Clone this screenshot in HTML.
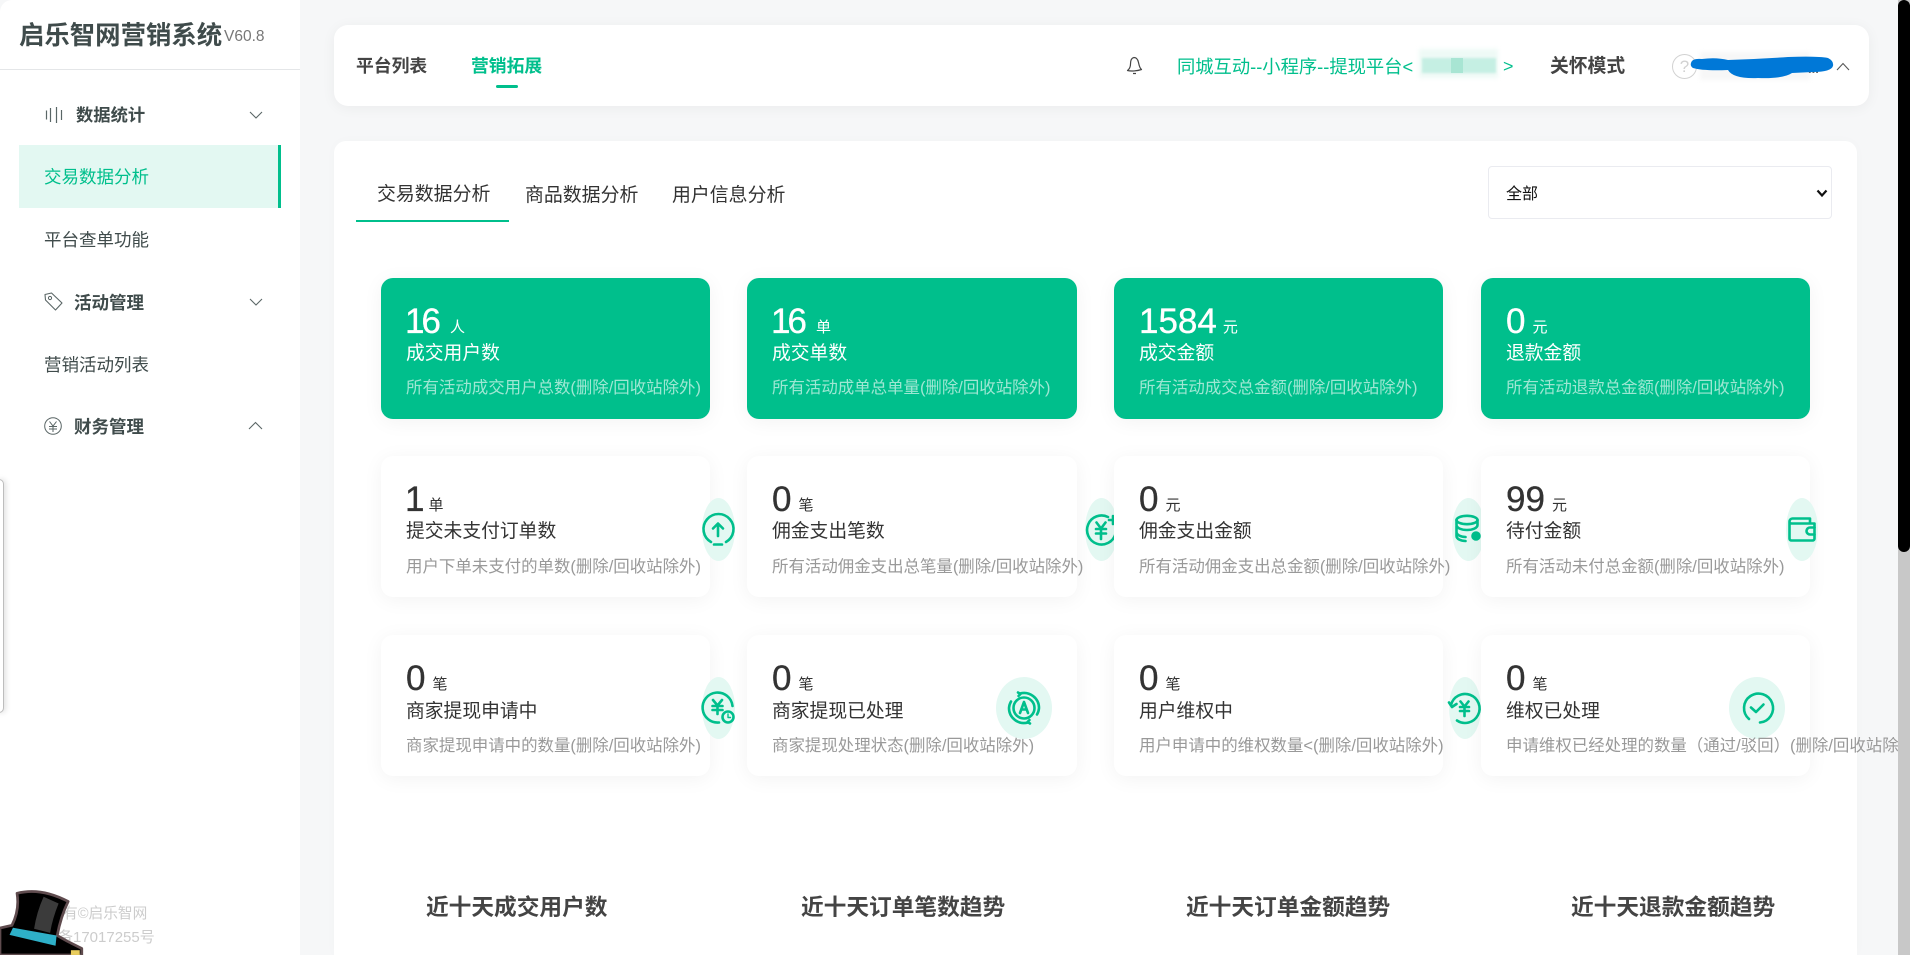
<!DOCTYPE html>
<html lang="zh"><head><meta charset="utf-8"><title>启乐智网营销系统</title>
<style>
*{box-sizing:border-box;margin:0;padding:0}
html,body{width:1910px;height:955px;overflow:hidden;background:#f6f7f8}
body{font-family:"Liberation Sans","Noto Sans CJK SC",sans-serif;color:#333;position:relative}
.a{position:absolute;white-space:nowrap;line-height:1}
#side{position:absolute;left:0;top:0;width:300px;height:955px;background:#fff;border-radius:12px 0 0 0}
.m{color:#3f4b4b;font-size:17.5px}
.b{font-weight:700}
#main{position:absolute;left:334px;top:141px;width:1523px;height:814px;background:#fff;border-radius:12px 12px 0 0;box-shadow:0 0 12px rgba(0,0,0,.02)}
#head{position:absolute;left:334px;top:25px;width:1535px;height:81px;background:#fff;border-radius:14px;box-shadow:0 2px 14px rgba(0,0,0,.05)}
.card{position:absolute;width:329px;height:141px;border-radius:12px;background:#fff;box-shadow:0 3px 20px rgba(0,0,0,.05)}
.card.g{background:#00bf8c;color:#fff}
.n{position:absolute;left:25px;top:26px;font-size:35px;line-height:36px;white-space:nowrap;color:#333;-webkit-text-stroke:.35px currentColor}
.n span{font-size:15px;margin-left:7px;position:relative;top:-1.5px;-webkit-text-stroke:0}
.n i{font-style:normal;margin:0 -3px 0 -1px}
.g .n{color:#fff}
.l{position:absolute;left:25px;top:64px;font-size:18.8px;line-height:22px;white-space:nowrap;color:#333}
.g .l{color:#fff}
.s{position:absolute;left:25px;top:101px;font-size:16.45px;line-height:19px;white-space:nowrap;color:#999}
.g .s{color:rgba(255,255,255,.62)}
.w .s{top:102px}
.r3 .l{top:65px}
.r3 .s{top:102px}
.ov{position:absolute;background:#e3f8f2;border-radius:50%}
.ic{position:absolute;overflow:visible}
.ic *{fill:none;stroke:#00bf8c;stroke-width:2.6;stroke-linecap:round;stroke-linejoin:round}
.t{font-size:22.7px;font-weight:700;color:#444;top:896px}
</style></head><body>

<div id="side">
  <div class="a b" style="left:19px;top:23px;font-size:25.4px;color:#3f4b4b;line-height:26px">启乐智网营销系统</div>
  <div class="a" style="left:224px;top:29px;font-size:15.5px;color:#777">V60.8</div>
  <div style="position:absolute;left:0;top:69px;width:300px;height:1px;background:#e4e6e8"></div>

  <svg class="a" style="left:45px;top:106px" width="18" height="18" viewBox="0 0 18 18"><path d="M1.500 4.500v9M5.500 2v14M11.500 1v16M16.500 4v10" stroke="#5a6666" stroke-width="1.200" fill="none"/></svg>
  <div class="a m b" style="left:76px;top:107px;font-size:17.3px">数据统计</div>
  <svg class="a" style="left:249px;top:111px" width="14" height="9" viewBox="0 0 14 9"><path d="M1 1l6 6 6-6" stroke="#5a6666" stroke-width="1.100" fill="none"/></svg>

  <div style="position:absolute;left:19px;top:145px;width:262px;height:63px;background:#e3f8f2;border-right:3px solid #00bf8c"></div>
  <div class="a m" style="left:44px;top:169px;color:#00bf8c">交易数据分析</div>
  <div class="a m" style="left:44px;top:232px">平台查单功能</div>

  <svg class="a" style="left:44px;top:292px" width="19" height="19" viewBox="0 0 19 19"><path d="M1 2.500L7.500 1 18 11l-6.500 7L1.500 8z" stroke="#5a6666" stroke-width="1.100" fill="none" stroke-linejoin="round"/><circle cx="6" cy="6" r="1.600" stroke="#5a6666" stroke-width="1" fill="none"/></svg>
  <div class="a m b" style="left:74px;top:295px">活动管理</div>
  <svg class="a" style="left:249px;top:298px" width="14" height="9" viewBox="0 0 14 9"><path d="M1 1l6 6 6-6" stroke="#5a6666" stroke-width="1.100" fill="none"/></svg>

  <div class="a m" style="left:44px;top:357px">营销活动列表</div>

  <svg class="a" style="left:44px;top:417px" width="18" height="18" viewBox="0 0 18 18"><circle cx="9" cy="9" r="8.300" stroke="#5a6666" stroke-width="1" fill="none"/><path d="M5.500 4.500L9 9l3.500-4.500M5 9.500h8M5 12h8M9 9v6" stroke="#5a6666" stroke-width="1" fill="none"/></svg>
  <div class="a m b" style="left:74px;top:419px">财务管理</div>
  <svg class="a" style="left:248px;top:421px" width="15" height="9" viewBox="0 0 15 9"><path d="M1 8l6.500-6.500L14 8" stroke="#5a6666" stroke-width="1.100" fill="none"/></svg>

  <div class="a" style="left:63px;top:907px;font-size:14.7px;color:#ccc">有©启乐智网</div>
  <div class="a" style="left:58px;top:930px;font-size:15px;color:#ccc">备17017255号</div>
</div>

<div style="position:absolute;left:-6px;top:479px;width:10px;height:234px;background:#fff;border:1px solid #bdbdbd;border-radius:5px;box-shadow:2px 0 6px rgba(0,0,0,.12)"></div>

<svg class="a" style="left:0;top:881px" width="92" height="74" viewBox="0 0 270 217">
  <path d="M0 138L35 130Q58 85 50 36Q120 18 200 60Q178 105 168 160L198 177L240 198L240 217H0Z" fill="#000" stroke="#5f4b4e" stroke-width="8" stroke-linejoin="round"/>
  <path d="M128 46L172 66Q154 110 147 152L100 140Q108 90 128 46Z" fill="#3b3b3b"/>
  <path d="M38 137L166 160L163 190L28 158Z" fill="#2eb0c8"/>
  <path d="M208 203h26v14h-26z" fill="#e9cd5d"/>
</svg>

<div id="head">
  <div class="a b" style="left:22px;top:33px;font-size:17.8px;color:#444">平台列表</div>
  <div class="a b" style="left:137px;top:33px;font-size:17.8px;color:#00bf8c">营销拓展</div>
  <div style="position:absolute;left:162px;top:60px;width:22px;height:3px;border-radius:2px;background:#00bf8c"></div>
  <svg class="a" style="left:792px;top:31px" width="17" height="20" viewBox="0 0 17 20"><path d="M8 1.500C5 2 4.500 5 4.500 8S3.500 13 1.500 14.500C5 15.500 11 15 15.500 13.500 13.500 12 13 9 12.500 6.500S11 1.500 8 1.500ZM7 17.500h3" stroke="#444" stroke-width="1.200" fill="none" stroke-linejoin="round"/></svg>
  <div class="a" style="left:843px;top:33px;font-size:18.3px;color:#00bf8c">同城互动--小程序--提现平台&lt;</div>
  <div style="position:absolute;left:1085px;top:24px;width:79px;height:29px;background:#eefaf6;filter:blur(2px)"></div>
  <div style="position:absolute;left:1088px;top:33px;width:74px;height:15px;background:#c5efe3;filter:blur(1px)"></div>
  <div style="position:absolute;left:1117px;top:33px;width:12px;height:15px;background:#a8e5d3"></div>
  <div class="a" style="left:1169px;top:33px;font-size:17.9px;color:#00bf8c">&gt;</div>
  <div class="a b" style="left:1216px;top:32px;font-size:18.8px;color:#444">关怀模式</div>
  <div class="a" style="left:1338px;top:29px;width:25px;height:25px;border:1px solid #d2d2d2;border-radius:50%;text-align:center;line-height:23px;font-size:17px;color:#d2d2d2">?</div>
  <div style="position:absolute;left:1366px;top:27px;width:110px;height:28px;background:#f7f7f7;filter:blur(2px)"></div>
  <div class="a b" style="left:1474px;top:37px;font-size:13px;color:#666">...</div>
  <svg class="a" style="left:1354px;top:29px" width="146" height="26" viewBox="0 0 146 26"><path d="M3 9Q4 4 14 5Q28 3 40 6Q70 5 100 3Q130 2 140 4Q146 7 145 12Q143 18 125 18L104 19Q95 25 70 24Q45 25 40 16Q15 17 5 14Q2 12 3 9Z" fill="#0078d7"/></svg>
  <svg class="a" style="left:1502px;top:37px" width="14" height="9" viewBox="0 0 14 9"><path d="M1 8l6-6.500L13 8" stroke="#555" stroke-width="1.100" fill="none"/></svg>
</div>

<div id="main"></div>

<div class="a" style="left:377px;top:184px;font-size:18.900px;color:#333;line-height:19px;margin-top:1px">交易数据分析</div>
<div class="a" style="left:525px;top:185px;font-size:18.900px;color:#333;line-height:19px;margin-top:1px">商品数据分析</div>
<div class="a" style="left:672px;top:185px;font-size:18.900px;color:#333;line-height:19px;margin-top:1px">用户信息分析</div>
<div style="position:absolute;left:356px;top:220px;width:153px;height:2px;background:#00bf8c"></div>
<div style="position:absolute;left:1488px;top:166px;width:344px;height:53px;border:1px solid #eaebf0;border-radius:4px;background:#fff"></div>
<div class="a" style="left:1506px;top:187px;font-size:16px;color:#111">全部</div>
<svg class="a" style="left:1816px;top:189px" width="12" height="9" viewBox="0 0 12 9"><path d="M1.500 1.500L6 6.500l4.500-5" stroke="#111" stroke-width="2.200" fill="none"/></svg>

<!-- row 1 -->
<div class="card g" style="left:381px;top:278px"><div class="n"><i>1</i>6<span style="margin-left:9px">人</span></div><div class="l">成交用户数</div><div class="s">所有活动成交用户总数(删除/回收站除外)</div></div>
<div class="card g" style="left:747px;top:278px;width:330px"><div class="n"><i>1</i>6<span style="margin-left:9px">单</span></div><div class="l">成交单数</div><div class="s">所有活动成单总单量(删除/回收站除外)</div></div>
<div class="card g" style="left:1114px;top:278px"><div class="n">1584<span style="margin-left:6px">元</span></div><div class="l">成交金额</div><div class="s">所有活动成交总金额(删除/回收站除外)</div></div>
<div class="card g" style="left:1481px;top:278px"><div class="n">0<span>元</span></div><div class="l">退款金额</div><div class="s">所有活动退款总金额(删除/回收站除外)</div></div>

<!-- row 2 -->
<div class="card w" style="left:381px;top:456px"><div class="n"><i>1</i><span style="margin-left:7px">单</span></div><div class="l">提交未支付订单数</div><div class="s">用户下单未支付的单数(删除/回收站除外)</div></div>
<div class="ov" style="left:702px;top:498px;width:33px;height:63px"></div>
<svg class="ic" style="left:702px;top:514px" width="32" height="32" viewBox="0 0 32 32"><path d="M9 28A15 15 0 1 1 24 28"/><path d="M16 22V10M11 14.500L16 9.500 21 14.500M12 30.500h8"/></svg>

<div class="card w" style="left:747px;top:456px;width:330px"><div class="n">0<span>笔</span></div><div class="l">佣金支出笔数</div><div class="s">所有活动佣金支出总笔量(删除/回收站除外)</div></div>
<div class="ov" style="left:1085px;top:498px;width:33px;height:63px"></div>
<svg class="ic" style="left:1086px;top:514px" width="32" height="32" viewBox="0 0 32 32"><path d="M22 3A14.500 14.500 0 1 0 29.500 20"/><path d="M10.500 8.500L15 14.500l4.500-6M10 15h10M10 19.500h10M15 15v10M23 6h8M27 2v8"/></svg>

<div class="card w" style="left:1114px;top:456px"><div class="n">0<span>元</span></div><div class="l">佣金支出金额</div><div class="s">所有活动佣金支出总金额(删除/回收站除外)</div></div>
<div class="ov" style="left:1452px;top:498px;width:33px;height:63px"></div>
<svg class="ic" style="left:1454px;top:514px" width="30" height="30" viewBox="0 0 30 30"><g style="stroke-width:2.200"><ellipse cx="13" cy="6" rx="10.500" ry="4.200"/><path d="M2.500 6v5c0 3 5 5 10.500 5s10.500-2 10.500-5V6M2.500 12v6c0 3 4.500 5 9 5M2.500 18v4c0 3 4.500 5 9 5"/><circle cx="22" cy="22" r="3.500" style="fill:#00bf8c"/></g></svg>

<div class="card w" style="left:1481px;top:456px"><div class="n">99<span>元</span></div><div class="l">待付金额</div><div class="s">所有活动未付总金额(删除/回收站除外)</div></div>
<div class="ov" style="left:1786px;top:498px;width:32px;height:63px"></div>
<svg class="ic" style="left:1788px;top:517px" width="28" height="25" viewBox="0 0 28 25"><g style="stroke-width:1.800"><path d="M1.500 5V21.500a2 2 0 0 0 2 2H24.500a2 2 0 0 0 2-2V6.500H3.500a2 2 0 0 1-2-2 3 3 0 0 1 3-3H22v5"/><path d="M26.500 10.500h-4.500a3 3 0 0 0 0 7h4.500"/></g></svg>

<!-- row 3 -->
<div class="card r3" style="left:381px;top:635px"><div class="n">0<span>笔</span></div><div class="l">商家提现申请中</div><div class="s">商家提现申请中的数量(删除/回收站除外)</div></div>
<div class="ov" style="left:702px;top:677px;width:33px;height:62px"></div>
<svg class="ic" style="left:702px;top:692px" width="32" height="32" viewBox="0 0 32 32"><path d="M30.500 14A15 15 0 1 0 17 30.500"/><path d="M11 8L15.500 13.500l4.500-5.500M10.500 14h10M10.500 18h10M15.500 14V22"/><circle cx="26" cy="25" r="5.500"/><path d="M26 22v3.500h2.500" style="stroke-width:1.400"/></svg>

<div class="card r3" style="left:747px;top:635px;width:330px"><div class="n">0<span>笔</span></div><div class="l">商家提现已处理</div><div class="s">商家提现处理状态(删除/回收站除外)</div></div>
<div class="ov" style="left:996px;top:677px;width:56px;height:62px"></div>
<svg class="ic" style="left:1007px;top:692px" width="34" height="32" viewBox="0 0 34 32"><g style="stroke-width:1.200"><path d="M13 1.500A15 15 0 0 1 32 16 15 15 0 0 1 30 22.500M21 30.500A15 15 0 0 1 2 16 15 15 0 0 1 4 9.500"/><circle cx="17" cy="16" r="10.500"/><path d="M13 21L17 10 21 21M14.300 17.500h5.400"/><path d="M11 0.500l2.500 1.500-2 2M23 31.500l-2.500-1.500 2-2"/></g></svg>

<div class="card r3" style="left:1114px;top:635px"><div class="n">0<span>笔</span></div><div class="l">用户维权中</div><div class="s">用户申请中的维权数量&lt;(删除/回收站除外)</div></div>
<div class="ov" style="left:1449px;top:677px;width:32px;height:62px"></div>
<svg class="ic" style="left:1448px;top:692px" width="32" height="32" viewBox="0 0 32 32"><path d="M3 13A14.500 14.500 0 1 1 9 28.500"/><path d="M1 10.500L4 15l4.500-3M12.500 9.500L16.500 14.500l4-5M12 15h9M12 19h9M16.500 15V24"/></svg>

<div class="card r3" style="left:1481px;top:635px"><div class="n">0<span>笔</span></div><div class="l">维权已处理</div></div>
<div class="ov" style="left:1729px;top:677px;width:56px;height:62px"></div>
<div class="a" style="left:1506px;top:737px;font-size:16.45px;line-height:19px;color:#999;width:392px;overflow:hidden">申请维权已经处理的数量（通过/驳回）(删除/回收站除外)</div>
<svg class="ic" style="left:1741px;top:692px" width="32" height="32" viewBox="0 0 32 32"><path d="M8 27A14.500 14.500 0 1 1 19 30.500"/><path d="M10 15.500L15 20 22.500 12.500"/></svg>

<div class="a t" style="left:426px">近十天成交用户数</div>
<div class="a t" style="left:801px">近十天订单笔数趋势</div>
<div class="a t" style="left:1186px">近十天订单金额趋势</div>
<div class="a t" style="left:1571px">近十天退款金额趋势</div>

<div style="position:absolute;left:1898px;top:0;width:12px;height:955px;background:#c8c8c8"></div>
<div style="position:absolute;left:1898px;top:0;width:12px;height:552px;background:#000;border-radius:6px"></div>
</body></html>
